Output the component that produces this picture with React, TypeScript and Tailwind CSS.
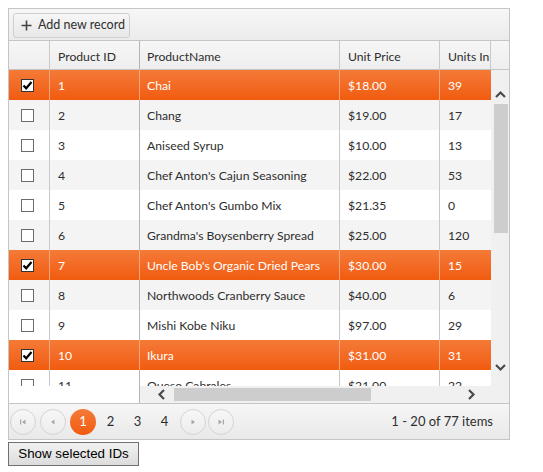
import React from "react";

type Row = { id: number; name: string; price: string; units: number; sel: boolean };

const rows: Row[] = [
  { id: 1, name: "Chai", price: "$18.00", units: 39, sel: true },
  { id: 2, name: "Chang", price: "$19.00", units: 17, sel: false },
  { id: 3, name: "Aniseed Syrup", price: "$10.00", units: 13, sel: false },
  { id: 4, name: "Chef Anton's Cajun Seasoning", price: "$22.00", units: 53, sel: false },
  { id: 5, name: "Chef Anton's Gumbo Mix", price: "$21.35", units: 0, sel: false },
  { id: 6, name: "Grandma's Boysenberry Spread", price: "$25.00", units: 120, sel: false },
  { id: 7, name: "Uncle Bob's Organic Dried Pears", price: "$30.00", units: 15, sel: true },
  { id: 8, name: "Northwoods Cranberry Sauce", price: "$40.00", units: 6, sel: false },
  { id: 9, name: "Mishi Kobe Niku", price: "$97.00", units: 29, sel: false },
  { id: 10, name: "Ikura", price: "$31.00", units: 31, sel: true },
  { id: 11, name: "Queso Cabrales", price: "$21.00", units: 22, sel: false },
];

function rowBg(r: Row, i: number) {
  if (r.sel) return "bg-gradient-to-b from-[#f47a36] to-[#f15b0b] text-white";
  return i % 2 === 1 ? "bg-[#f4f4f4] text-[#2e2e2e]" : "bg-white text-[#2e2e2e]";
}

function cellBorder(r: Row) {
  return r.sel ? "border-r border-[#f7a67a]" : "border-r border-[#c9c9c9]";
}

function Checkbox({ checked }: { checked: boolean }) {
  return (
    <div className={"w-[13px] h-[13px] bg-white border flex items-center justify-center " + (checked ? "border-[#333]" : "border-[#6b6b6b]")}>
      {checked && (
        <svg width="11" height="11" viewBox="0 0 11 11">
          <path d="M1.5 5.5 L4.2 8.3 L9.5 2" fill="none" stroke="#000" strokeWidth="2.2" />
        </svg>
      )}
    </div>
  );
}

function Chevron({ dir }: { dir: "up" | "down" | "left" | "right" }) {
  const d =
    dir === "up"
      ? "M2 8 L6.5 3.5 L11 8"
      : dir === "down"
      ? "M2 4 L6.5 8.5 L11 4"
      : dir === "left"
      ? "M8 2 L3.5 6.5 L8 11"
      : "M4 2 L8.5 6.5 L4 11";
  return (
    <svg width="13" height="13" viewBox="0 0 13 13">
      <path d={d} fill="none" stroke="#4a4a4a" strokeWidth="2.2" />
    </svg>
  );
}

function PagerBtn({ kind }: { kind: "first" | "prev" | "next" | "last" }) {
  return (
    <div className="w-[26px] h-[26px] rounded-full border border-[#d4d4d4] bg-gradient-to-b from-[#f7f7f7] to-[#ececec] flex items-center justify-center">
      <svg width="10" height="10" viewBox="0 0 10 10">
        {kind === "first" && (
          <>
            <rect x="2" y="2.5" width="1.2" height="5" fill="#a8a8a8" />
            <path d="M7.5 2.5 L4 5 L7.5 7.5 Z" fill="#a8a8a8" />
          </>
        )}
        {kind === "prev" && <path d="M6.5 2.5 L3 5 L6.5 7.5 Z" fill="#a8a8a8" />}
        {kind === "next" && <path d="M3.5 2.5 L7 5 L3.5 7.5 Z" fill="#a8a8a8" />}
        {kind === "last" && (
          <>
            <path d="M2.5 2.5 L6 5 L2.5 7.5 Z" fill="#a8a8a8" />
            <rect x="6.8" y="2.5" width="1.2" height="5" fill="#a8a8a8" />
          </>
        )}
      </svg>
    </div>
  );
}

export default function App() {
  const font = { fontFamily: 'Lato, "Open Sans", sans-serif' };
  return (
    <div className="p-2 bg-white w-[543px] h-[472px]">
      <div className="w-[502px] border border-[#c5c5c5] text-[12.2px]" style={font}>
        {/* toolbar */}
        <div className="h-[32px] border-b border-[#c5c5c5] bg-gradient-to-b from-[#f7f7f7] to-[#ebebeb] flex items-center pl-[4px] pt-[1px]">
          <div className="h-[25px] w-[117px] rounded-[3px] border border-[#cfcfcf] bg-gradient-to-b from-[#f6f6f6] to-[#e8e8e8] flex items-center pl-[7px] gap-[6px] text-[#2e2e2e] text-[12.5px] whitespace-nowrap">
            <svg width="11" height="11" viewBox="0 0 11 11">
              <path d="M5.5 0.5 V10.5 M0.5 5.5 H10.5" stroke="#444" strokeWidth="1.6" />
            </svg>
            <span>Add new record</span>
          </div>
        </div>
        {/* header */}
        <div className="h-[29px] border-b border-[#c5c5c5] bg-gradient-to-b from-[#f6f6f6] to-[#eeeeee] flex text-[#2e2e2e]">
          <div className="w-[41px] border-r border-[#c9c9c9]" />
          <div className="w-[90px] border-r border-[#b5b5b5] pl-[8px] pt-[4px] flex items-center">Product ID</div>
          <div className="w-[200px] border-r border-[#c9c9c9] pl-[7px] pt-[4px] flex items-center">ProductName</div>
          <div className="w-[100px] border-r border-[#c9c9c9] pl-[8px] pt-[4px] flex items-center">Unit Price</div>
          <div className="w-[51px] border-r border-[#c9c9c9] pl-[8px] pt-[4px] flex items-center overflow-hidden whitespace-nowrap">Units In</div>
          <div className="w-[17px]" />
        </div>
        {/* body */}
        <div className="h-[333px] flex">
          {/* locked */}
          <div className="w-[131px] flex flex-col">
            <div className="h-[316px] overflow-hidden">
              {rows.map((r, i) => (
                <div key={r.id} className={"h-[30px] flex " + rowBg(r, i)}>
                  <div className={"w-[41px] flex items-center pl-[12px] " + cellBorder(r)}>
                    <Checkbox checked={r.sel} />
                  </div>
                  <div className={"w-[90px] flex items-center pl-[8px] pt-[3px] " + (r.sel ? "border-r border-[#f7a67a]" : "border-r border-[#b5b5b5]")}>{r.id}</div>
                </div>
              ))}
            </div>
            <div className="h-[17px] bg-white border-r border-[#b5b5b5]" />
          </div>
          {/* scrollable */}
          <div className="w-[351px] flex flex-col">
            <div className="h-[316px] overflow-hidden">
              {rows.map((r, i) => (
                <div key={r.id} className={"h-[30px] flex whitespace-nowrap " + rowBg(r, i)}>
                  <div className={"w-[200px] flex items-center pl-[7px] pt-[3px] " + cellBorder(r)}>{r.name}</div>
                  <div className={"w-[100px] flex items-center pl-[8px] pt-[3px] " + cellBorder(r)}>{r.price}</div>
                  <div className="w-[51px] flex items-center pl-[8px] pt-[3px]">{r.units}</div>
                </div>
              ))}
            </div>
            <div className="h-[17px] bg-[#f0f0f0] flex items-center">
              <div className="w-[34px] flex items-center justify-center pl-[10px]">
                <Chevron dir="left" />
              </div>
              <div className="w-[197px] h-[13px] bg-[#cdcdcd]" />
              <div className="flex-1 flex items-center justify-end pr-[13px]">
                <Chevron dir="right" />
              </div>
            </div>
          </div>
          {/* vertical scrollbar */}
          <div className="w-[18px] flex flex-col">
            <div className="h-[316px] bg-[#f0f0f0] flex flex-col items-center">
              <div className="h-[34px] flex items-end justify-center pb-[2px] pl-[1px]">
                <Chevron dir="up" />
              </div>
              <div className="w-[14px] h-[129px] bg-[#cdcdcd] ml-[1px]" />
              <div className="flex-1 flex items-end justify-center pb-[12px] pl-[1px]">
                <Chevron dir="down" />
              </div>
            </div>
            <div className="h-[17px] bg-[#f0f0f0]" />
          </div>
        </div>
        {/* pager */}
        <div className="h-[36px] border-t border-[#c5c5c5] bg-gradient-to-b from-[#f6f6f6] to-[#e9e9e9] flex items-center pl-[1px] pr-[16px] text-[#2e2e2e] text-[13px]">
          <div className="flex items-center gap-[4px]">
            <PagerBtn kind="first" />
            <PagerBtn kind="prev" />
            <div className="w-[26px] h-[26px] rounded-full bg-gradient-to-b from-[#f47a36] to-[#f15b0b] text-white flex items-center justify-center">1</div>
          </div>
          <div className="flex items-center ml-[1px]">
            <span className="w-[27px] text-center">2</span>
            <span className="w-[27px] text-center">3</span>
            <span className="w-[27px] text-center">4</span>
          </div>
          <div className="flex items-center gap-[2px] ml-[2px]">
            <PagerBtn kind="next" />
            <PagerBtn kind="last" />
          </div>
          <div className="ml-auto">1 - 20 of 77 items</div>
        </div>
      </div>
      <button
        className="mt-0 h-[24px] w-[131px] border border-[#707070] bg-gradient-to-b from-[#f2f2f2] to-[#dcdcdc] text-[13.33px] text-black"
        style={{ fontFamily: '"Liberation Sans", Arial, sans-serif' }}
      >
        Show selected IDs
      </button>
    </div>
  );
}
